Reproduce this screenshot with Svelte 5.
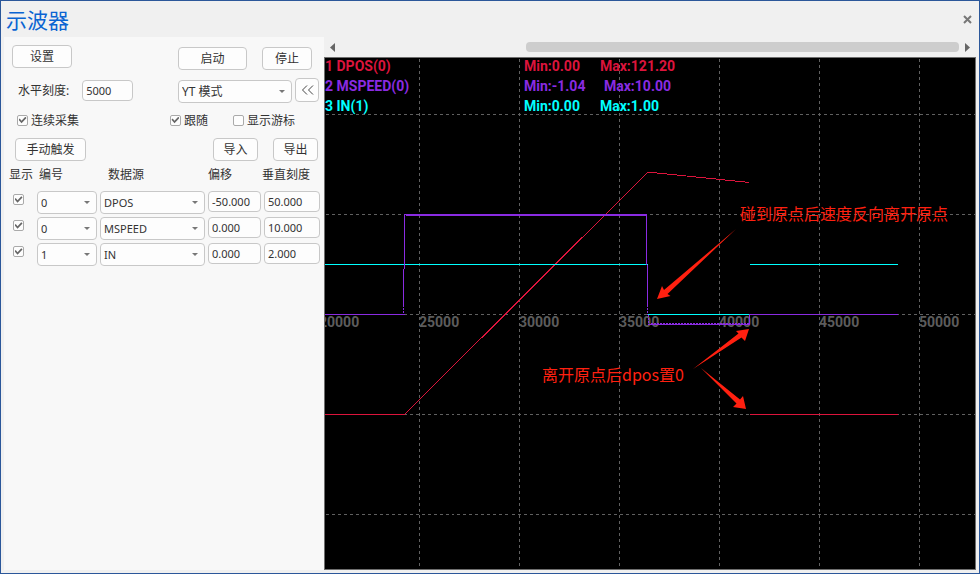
<script>
  let horizontalScale = $state('5000');
  let mode = $state('YT 模式');
  let continuous = $state(true);
  let follow = $state(true);
  let showCursor = $state(false);

  let channels = $state([
    { visible: true, index: '0', source: 'DPOS', offset: '-50.000', scale: '50.000' },
    { visible: true, index: '0', source: 'MSPEED', offset: '0.000', scale: '10.000' },
    { visible: true, index: '1', source: 'IN', offset: '0.000', scale: '2.000' }
  ]);

  const sources = ['DPOS', 'MSPEED', 'IN'];
  const indexes = ['0', '1', '2', '3'];

  const legend = [
    { name: '1 DPOS(0)', min: 'Min:0.00', max: 'Max:121.20', maxX: 275, color: '#dc143c' },
    { name: '2 MSPEED(0)', min: 'Min:-1.04', max: 'Max:10.00', maxX: 279, color: '#8a2be2' },
    { name: '3 IN(1)', min: 'Min:0.00', max: 'Max:1.00', maxX: 275, color: '#00ffff' }
  ];

  // grid pitch is 100 units, one division per 5000 samples
  const columns = [94, 194, 294, 394, 494, 594];
  const rows = [56, 156, 256, 356, 456];
  const ticks = [20000, 25000, 30000, 35000, 40000, 45000, 50000];
</script>

<div class="window">
  <header class="titlebar">
    <h1>示波器</h1>
    <button class="close" aria-label="关闭">
      <svg width="9" height="9" viewBox="0 0 9 9"><path d="M1 1l7 7M8 1l-7 7" /></svg>
    </button>
  </header>

  <main class="body">
    <section class="panel">
      <div class="row actions">
        <button class="btn">设置</button>
        <div class="group wide">
          <button class="btn start">启动</button>
          <button class="btn stop">停止</button>
        </div>
      </div>

      <div class="row scale">
        <label for="hscale">水平刻度:</label>
        <input id="hscale" class="field" type="text" bind:value={horizontalScale} />
        <div class="group">
          <span class="select mode">
            <select aria-label="模式" bind:value={mode}>
              <option>YT 模式</option>
              <option>XY 模式</option>
            </select>
          </span>
          <button class="btn collapse" aria-label="收起">
            <svg width="13" height="10" viewBox="0 0 13 10"><path d="M6 0.5L1.5 5L6 9.5M12 0.5L7.5 5L12 9.5" /></svg>
          </button>
        </div>
      </div>

      <div class="row checks">
        <label class="check"><input type="checkbox" bind:checked={continuous} />连续采集</label>
        <div class="group">
          <label class="check"><input type="checkbox" bind:checked={follow} />跟随</label>
          <label class="check"><input type="checkbox" bind:checked={showCursor} />显示游标</label>
        </div>
      </div>

      <div class="row trigger">
        <button class="btn manual">手动触发</button>
        <div class="group wide">
          <button class="btn file">导入</button>
          <button class="btn file">导出</button>
        </div>
      </div>

      <table>
        <thead>
          <tr>
            <th class="col-show">显示</th>
            <th class="col-index">编号</th>
            <th class="col-source">数据源</th>
            <th class="col-offset">偏移</th>
            <th class="col-scale">垂直刻度</th>
          </tr>
        </thead>
        <tbody>
          {#each channels as ch, i}
            <tr>
              <td class="col-show">
                <input type="checkbox" aria-label="显示 {i + 1}" bind:checked={ch.visible} />
              </td>
              <td>
                <span class="select">
                  <select aria-label="编号 {i + 1}" bind:value={ch.index}>
                    {#each indexes as n}<option>{n}</option>{/each}
                  </select>
                </span>
              </td>
              <td>
                <span class="select">
                  <select aria-label="数据源 {i + 1}" bind:value={ch.source}>
                    {#each sources as s}<option>{s}</option>{/each}
                  </select>
                </span>
              </td>
              <td><input class="field" type="text" aria-label="偏移 {i + 1}" bind:value={ch.offset} /></td>
              <td class="col-scale">
                <input class="field" type="text" aria-label="垂直刻度 {i + 1}" bind:value={ch.scale} />
              </td>
            </tr>
          {/each}
        </tbody>
      </table>
    </section>

    <section class="scope">
      <div class="scrollbar">
        <button aria-label="向左滚动">
          <svg width="5" height="9" viewBox="0 0 5 9"><path d="M5 0v9L0 4.5z" /></svg>
        </button>
        <div class="track"><div class="thumb"></div></div>
        <button aria-label="向右滚动">
          <svg width="5" height="9" viewBox="0 0 5 9"><path d="M0 0v9L5 4.5z" /></svg>
        </button>
      </div>

      <div class="plot">
        <svg class="chart">
          <g class="grid" transform="translate(0.5 0.5)">
            {#each columns as x}<line x1={x} x2={x} y1="0" y2="100%" />{/each}
            {#each rows as y}<line x1="0" x2="100%" y1={y} y2={y} />{/each}
          </g>

          <g class="ticks">
            {#each ticks as t, i}<text x={i * 100 - 6} y="269">{t}</text>{/each}
          </g>

          <g class="legend">
            {#each legend as l, i}
              <g fill={l.color}>
                <text x="0" y={i * 20 + 13}>{l.name}</text>
                <text x="199" y={i * 20 + 13}>{l.min}</text>
                <text x={l.maxX} y={i * 20 + 13}>{l.max}</text>
              </g>
            {/each}
          </g>

          <g class="traces" transform="translate(-0.5 0.5)">
            <path class="dpos" d="M0 356H80L323 114H328L425 124M425 356H573" />
            <path class="in" d="M0 206H323M323 256H425M425 206H573" />
            <path class="mspeed" d="M0 256H80M79 248V210M80 210V156H322V206M323 206V248M324 266H425V256H573" />
            <path class="mspeed" d="M81 157H322" />
            <path class="mspeed ripple" d="M79 249V254M323 249V256M324 256V266M326 265H425" />
          </g>

          <g class="notes">
            <text x="415" y="162">碰到原点后速度反向离开原点</text>
            <text x="217" y="323">离开原点后dpos置0</text>
            <path d="M411 171L342.5 236L345.5 238L332 241L337 228L339 232Z" />
            <path d="M368 311L413.5 275.5L411 273L424 271L420 283L416.5 279.5Z" />
            <path d="M376 310L415 341.5L418 338L421 351L408 349L411.5 345.5Z" />
          </g>
        </svg>
      </div>
    </section>
  </main>
</div>

<style>
  :global(body) {
    margin: 0;
  }

  .window {
    box-sizing: border-box;
    min-height: 100vh;
    display: flex;
    flex-direction: column;
    border: 1px solid #2b579a;
    background: #f0f0f0;
    color: #333;
    font-family: "Noto Sans", "Noto Sans CJK SC", sans-serif;
    font-size: 12px;
  }

  /* Title bar */
  .titlebar {
    display: flex;
    align-items: center;
    justify-content: space-between;
    height: 36px;
    padding: 0 7px 0 5px;
  }

  h1 {
    margin: 0;
    font-family: "Noto Sans CJK SC", sans-serif;
    font-size: 21px;
    font-weight: 400;
    line-height: 36px;
    color: #0a64d2;
  }

  .close,
  .scrollbar button {
    display: flex;
    padding: 0;
    border: 0;
    background: none;
  }

  .close path {
    stroke: #777;
    stroke-width: 2;
  }

  .body {
    flex: 1;
    display: flex;
    padding: 0 3px 3px;
  }

  /* Settings panel */
  .panel {
    flex: 0 0 320px;
    padding-top: 8px;
    box-sizing: border-box;
    background: #f8f8f8;
  }

  .row {
    display: flex;
    align-items: center;
  }

  .group {
    display: flex;
    align-items: flex-start;
    gap: 3px;
    margin-left: auto;
  }

  .group.wide {
    gap: 15px;
  }

  .actions {
    padding: 0 12px 8px 8px;
    align-items: flex-start;
  }

  .actions .group {
    padding-top: 2px;
  }

  .scale {
    height: 24px;
    padding: 0 5px 0 14px;
  }

  .scale .field {
    width: 51px;
    margin-left: 13px;
  }

  .scale .group {
    height: 24px;
  }

  .checks {
    height: 36px;
    padding: 0 29px 0 13px;
  }

  .checks .group {
    gap: 25px;
  }

  .trigger {
    padding: 0 6px 0 11px;
  }

  .btn,
  .field,
  select {
    box-sizing: border-box;
    border: 1px solid #c8c8c8;
    border-radius: 4px;
    background: #fdfdfd;
    color: #333;
    font-family: inherit;
    font-size: 12px;
  }

  .btn {
    width: 60px;
    height: 24px;
    padding: 0;
    line-height: 20px;
  }

  .actions .btn,
  .trigger .btn {
    height: 23px;
  }

  .btn.start {
    width: 69px;
  }

  .btn.stop {
    width: 50px;
  }

  .btn.manual {
    width: 71px;
  }

  .btn.file {
    width: 45px;
  }

  .btn.collapse {
    display: flex;
    align-items: center;
    justify-content: center;
    width: 24px;
  }

  .collapse path {
    fill: none;
    stroke: #444;
  }

  .field {
    display: block;
    width: 100%;
    height: 21px;
    padding: 0 3px;
    font-size: 11px;
  }

  .select {
    position: relative;
    display: block;
  }

  .select.mode {
    width: 114px;
    margin-top: 2px;
  }

  select {
    appearance: none;
    display: block;
    width: 100%;
    height: 23px;
    padding: 0 16px 0 3px;
    font-size: 11px;
  }

  .mode select {
    font-size: 12px;
  }

  .select::after {
    content: "";
    position: absolute;
    top: 10px;
    right: 7px;
    border: 3px solid transparent;
    border-top-color: #777;
    border-bottom: 0;
    pointer-events: none;
  }

  .check {
    display: flex;
    align-items: center;
    gap: 3px;
  }

  input[type="checkbox"] {
    appearance: none;
    box-sizing: border-box;
    width: 11px;
    height: 11px;
    margin: 0;
    display: grid;
    place-items: center;
    border: 1px solid #aaa;
    border-radius: 2px;
    background: #fdfdfd;
  }

  input[type="checkbox"]:checked::before {
    content: "";
    width: 8px;
    height: 7px;
    background: #666;
    clip-path: polygon(0 45%, 15% 30%, 38% 60%, 85% 5%, 100% 20%, 38% 95%);
  }

  /* Channel table */
  table {
    width: 100%;
    table-layout: fixed;
    border-collapse: collapse;
  }

  th {
    height: 30px;
    padding: 0;
    font-weight: 400;
    line-height: 28px;
    text-align: left;
    vertical-align: top;
  }

  td {
    box-sizing: border-box;
    height: 26px;
    padding: 0 3px 0 0;
    vertical-align: top;
  }

  th.col-show {
    width: 28px;
    padding-left: 5px;
  }

  td.col-show {
    padding: 3px 0 0 9px;
  }

  th.col-index {
    width: 61px;
    padding-left: 2px;
  }

  th.col-source {
    width: 100px;
    padding-left: 8px;
  }

  th.col-offset {
    width: 54px;
  }

  td.col-scale {
    padding: 0 4px 0 2px;
  }

  td:nth-child(4) {
    padding-right: 1px;
  }

  /* Scope */
  .scope {
    flex: 1;
    min-width: 0;
    display: flex;
    flex-direction: column;
  }

  .scrollbar {
    display: flex;
    align-items: center;
    gap: 6px;
    height: 20px;
    padding: 0 6px;
  }

  .scrollbar path {
    fill: #666;
  }

  .track {
    flex: 1;
  }

  .thumb {
    width: 70%;
    height: 10px;
    margin-left: auto;
    border-radius: 4px;
    background: #cdcdcd;
  }

  .plot {
    flex: 1;
    display: flex;
    min-height: 480px;
    border: 1px solid #6e6e6e;
    background: #000;
  }

  .chart {
    flex: 1;
    width: 100%;
    overflow: hidden;
  }

  .grid line {
    stroke: #606060;
    stroke-dasharray: 3 3;
    shape-rendering: crispEdges;
  }

  .ticks text,
  .legend text {
    font-family: Roboto, sans-serif;
    font-size: 14px;
    font-weight: 700;
  }

  .ticks text {
    fill: #5c5c5c;
  }

  .traces path {
    fill: none;
    shape-rendering: crispEdges;
  }

  .dpos {
    stroke: #dc143c;
  }

  .mspeed {
    stroke: #8a2be2;
  }

  .in {
    stroke: #00ffff;
  }

  .ripple {
    stroke-dasharray: 2 1;
  }

  .notes {
    fill: #ff2010;
    font-family: "Noto Sans CJK SC", sans-serif;
    font-size: 16px;
  }
</style>
